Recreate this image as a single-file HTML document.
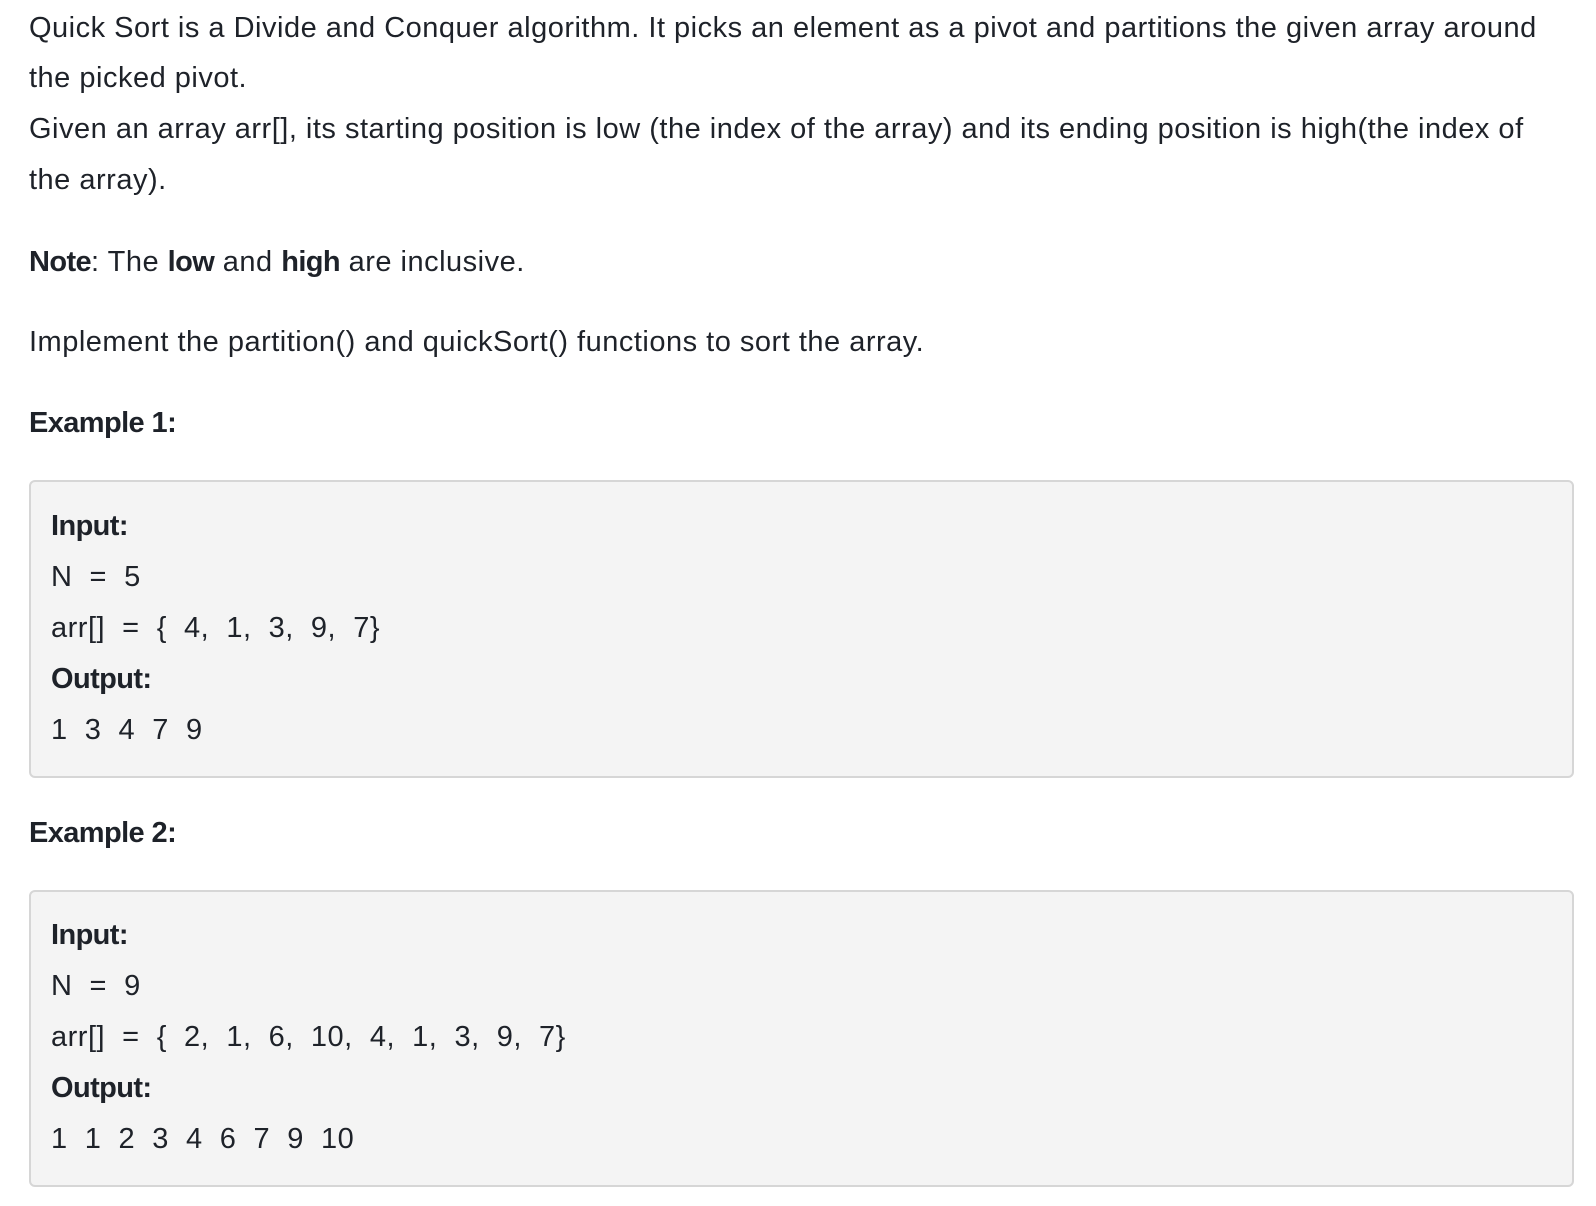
<!DOCTYPE html>
<html><head><meta charset="utf-8"><style>
body{margin:0;background:#fff;width:1596px;height:1206px;overflow:hidden;font-family:"Liberation Sans",sans-serif;color:#1e2229;font-size:29px;letter-spacing:0.5px;}
.l{position:absolute;left:29px;line-height:52px;white-space:pre;}
.b,b{font-weight:bold;letter-spacing:-0.6px;}
.box{position:absolute;left:29px;width:1541px;border:2px solid #d6d6d6;border-radius:6px;background:#f4f4f4;}
.i{left:51px;}
</style></head><body>
<div class="l" style="top:2px">Quick Sort is a Divide and Conquer algorithm. It picks an element as a pivot and partitions the given array around</div>
<div class="l" style="top:52px">the picked pivot.</div>
<div class="l" style="top:103px">Given an array arr[], its starting position is low (the index of the array) and its ending position is high(the index of</div>
<div class="l" style="top:154px">the array).</div>
<div class="l" style="top:236px"><b>Note</b>: The <b>low</b> and <b>high</b> are inclusive.</div>
<div class="l" style="top:316px">Implement the partition() and quickSort() functions to sort the array.</div>
<div class="l b" style="top:397px">Example 1:</div>
<div class="box" style="top:480px;height:294px"></div>
<div class="l i b" style="top:500px">Input:</div>
<div class="l i" style="top:551px">N  =  5</div>
<div class="l i" style="top:602px">arr[]  =  {  4,  1,  3,  9,  7}</div>
<div class="l i b" style="top:653px">Output:</div>
<div class="l i" style="top:704px">1  3  4  7  9</div>
<div class="l b" style="top:807px">Example 2:</div>
<div class="box" style="top:890px;height:293px"></div>
<div class="l i b" style="top:909px">Input:</div>
<div class="l i" style="top:960px">N  =  9</div>
<div class="l i" style="top:1011px">arr[]  =  {  2,  1,  6,  10,  4,  1,  3,  9,  7}</div>
<div class="l i b" style="top:1062px">Output:</div>
<div class="l i" style="top:1113px">1  1  2  3  4  6  7  9  10</div>
</body></html>
